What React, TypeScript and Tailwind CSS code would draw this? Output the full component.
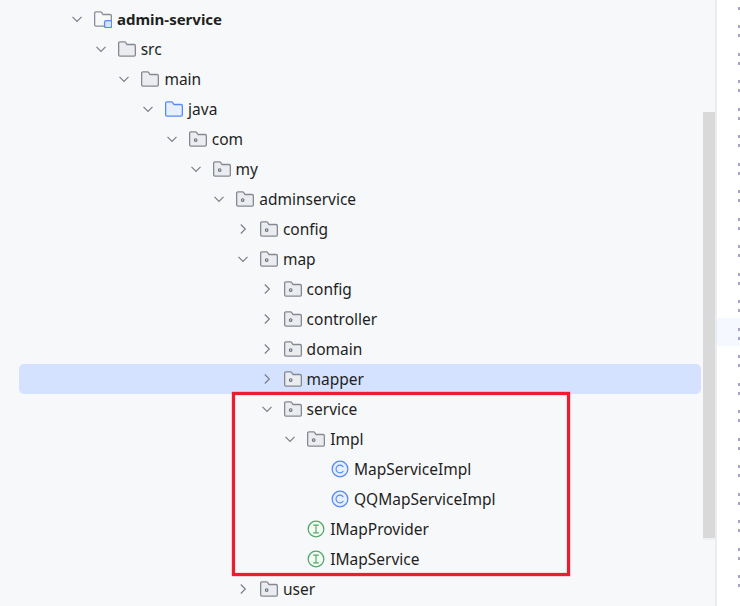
const rows: { label: string; depth: number; icon: string; open?: boolean; bold?: boolean; selected?: boolean }[] = [
  { label: "admin-service", depth: 0, icon: "module", open: true, bold: true },
  { label: "src", depth: 1, icon: "folder", open: true },
  { label: "main", depth: 2, icon: "folder", open: true },
  { label: "java", depth: 3, icon: "source", open: true },
  { label: "com", depth: 4, icon: "package", open: true },
  { label: "my", depth: 5, icon: "package", open: true },
  { label: "adminservice", depth: 6, icon: "package", open: true },
  { label: "config", depth: 7, icon: "package", open: false },
  { label: "map", depth: 7, icon: "package", open: true },
  { label: "config", depth: 8, icon: "package", open: false },
  { label: "controller", depth: 8, icon: "package", open: false },
  { label: "domain", depth: 8, icon: "package", open: false },
  { label: "mapper", depth: 8, icon: "package", open: false, selected: true },
  { label: "service", depth: 8, icon: "package", open: true },
  { label: "Impl", depth: 9, icon: "package", open: true },
  { label: "MapServiceImpl", depth: 10, icon: "class" },
  { label: "QQMapServiceImpl", depth: 10, icon: "class" },
  { label: "IMapProvider", depth: 9, icon: "interface" },
  { label: "IMapService", depth: 9, icon: "interface" },
  { label: "user", depth: 7, icon: "package", open: false },
];

const gutterMarks = [7, 25, 34, 53, 62, 80, 89, 108, 117, 135, 144, 163, 172, 190, 199, 218, 227, 245, 254, 273, 282, 300, 309, 328, 337, 355, 364, 383, 392, 410, 419, 438, 447, 465, 474, 493, 502, 520, 529, 548, 557, 575, 584];

const FOLDER =
  "M2.5 13.5A1 1 0 0 1 1.5 12.5V3.5A1 1 0 0 1 2.5 2.5H6.1C6.4 2.5 6.7 2.6 6.9 2.9L8 4.5H13.5A1 1 0 0 1 14.5 5.5V12.5A1 1 0 0 1 13.5 13.5Z";

function TreeIcon({ icon }: { icon: string }) {
  if (icon === "class") {
    return (
      <svg width="18" height="18" viewBox="1 1 14 14" fill="none">
        <circle cx="8" cy="8" r="6.1" fill="#e7effd" stroke="#548af7" />
        <path d="M10.3 6.2A3 3 0 1 0 10.3 9.8" stroke="#548af7" strokeWidth="0.9" strokeLinecap="round" />
      </svg>
    );
  }
  if (icon === "interface") {
    return (
      <svg width="18" height="18" viewBox="1 1 14 14" fill="none">
        <circle cx="8" cy="8" r="6.1" fill="#f2fcf3" stroke="#55a76a" />
        <path d="M5.8 5H10.2M5.8 11H10.2M8 5V11" stroke="#55a76a" strokeWidth="0.9" />
      </svg>
    );
  }
  if (icon === "module") {
    return (
      <svg width="18" height="18" viewBox="1 1 14 14" fill="none">
        <path d={FOLDER} fill="#f7f8fa" stroke="#8a8d99" />
        <rect x="9.2" y="9.2" width="5.6" height="5.6" rx="1.4" fill="#d4e2ff" stroke="#548af7" />
      </svg>
    );
  }
  if (icon === "source") {
    return (
      <svg width="18" height="18" viewBox="1 1 14 14" fill="none">
        <path d={FOLDER} fill="#e7effd" stroke="#548af7" />
      </svg>
    );
  }
  return (
    <svg width="18" height="18" viewBox="1 1 14 14" fill="none">
      <path d={FOLDER} fill="#ebecf0" stroke="#858892" />
      {icon === "package" && <circle cx="6.2" cy="8.8" r="1" stroke="#6c707e" strokeWidth="0.9" />}
    </svg>
  );
}

function Chevron({ open }: { open?: boolean }) {
  return (
    <svg width="16" height="16" viewBox="0 0 16 16" fill="none" stroke="#7b7e88" strokeWidth="1.2">
      {open ? <path d="M3.5 5.8L8 10.3L12.5 5.8" /> : <path d="M5.8 3.5L10.3 8L5.8 12.5" />}
    </svg>
  );
}

export default function App() {
  return (
    <div className="relative flex h-[606px] w-[740px] overflow-hidden bg-[#f7f8fa] font-['Noto_Sans',sans-serif] text-[15.5px] text-[#1e1f22]">
      <div className="w-[715px] pt-1">
        {rows.map((row, i) => (
          <div
            key={i}
            className={`ml-[19px] mr-[14px] flex h-[30px] items-center rounded-[5px] ${row.selected ? "bg-[#d4e2ff]" : ""}`}
            style={{ paddingLeft: 50 + row.depth * 23.7 }}
          >
            <span className="flex w-[25px] shrink-0">{row.open !== undefined && <Chevron open={row.open} />}</span>
            <span className="mr-[5px] flex shrink-0">
              <TreeIcon icon={row.icon} />
            </span>
            <span className={row.bold ? "text-[15px] font-bold" : "pt-0.5"}>{row.label}</span>
          </div>
        ))}
      </div>

      {/* scrollbar */}
      <div className="absolute left-[703px] top-[112px] h-[428px] w-3 border-b-2 border-[#f0f0f0] bg-[#d9d9d9]" />

      {/* editor gutter at the right */}
      <div className="relative w-[25px] border-l-2 border-[#ebecf0] bg-white">
        <div className="absolute left-0 right-0 top-[318px] h-7 bg-[#f5f8fe]" />
        {gutterMarks.map((y) => (
          <div key={y} className="absolute left-[21px] h-[3px] w-0.5 bg-[#a9a3c4]" style={{ top: y }} />
        ))}
      </div>

      {/* red annotation box */}
      <div className="absolute left-[232px] top-[392px] h-[184px] w-[338px] border-[3px] border-[#ee1c2e] shadow-[0_0_1px_#ee1c2e,inset_0_0_1px_#ee1c2e]" />
    </div>
  );
}
